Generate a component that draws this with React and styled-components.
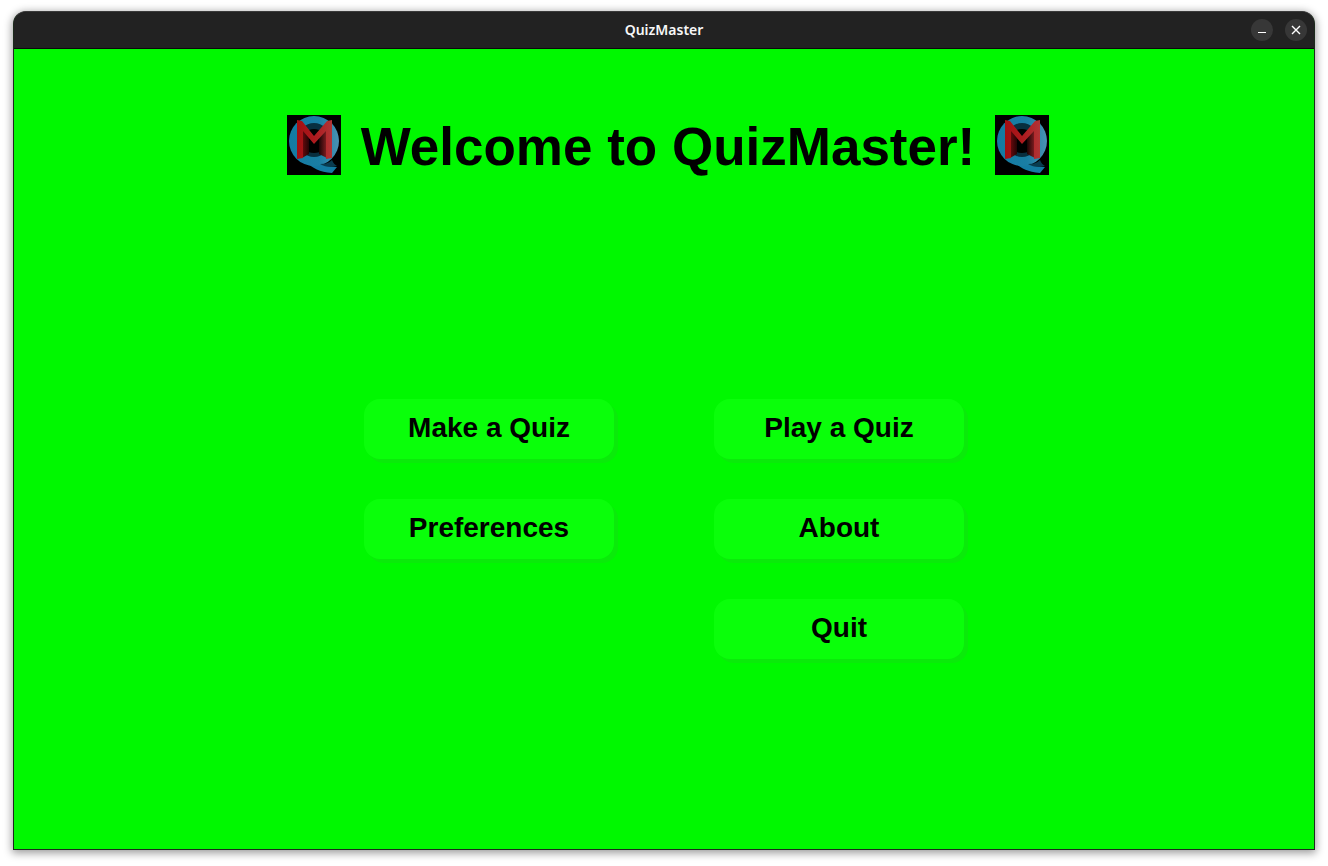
import React, { useId } from "react";
import styled, { createGlobalStyle } from "styled-components";

const GlobalStyle = createGlobalStyle`
  *, *::before, *::after { box-sizing: border-box; }
  body { margin: 0; background: #fff; }
`;

const Desktop = styled.div`
  display: flex;
  min-height: 100vh;
  padding: 11px 13px 16px;
`;

const Window = styled.div`
  flex: 1;
  display: flex;
  flex-direction: column;
  overflow: hidden;
  border: 1px solid #1c2a1c;
  border-top-color: #3a3a3a;
  border-radius: 13px 13px 0 0;
  background: #222;
  box-shadow: 0 2px 8px 1px rgba(0, 0, 0, 0.4);
`;

const TitleBar = styled.header`
  display: grid;
  grid-template-columns: 1fr auto 1fr;
  align-items: center;
  height: 37px;
  padding: 0 7px;
  border-bottom: 1px solid #0a0a0a;
  background: #222;
`;

const WindowTitle = styled.div`
  grid-column: 2;
  color: #f7f7f7;
  font: 600 14px/20px "Noto Sans", sans-serif;
`;

const WindowControls = styled.div`
  display: flex;
  justify-content: flex-end;
  gap: 12px;
`;

const ControlButton = styled.button`
  display: grid;
  place-items: center;
  width: 22px;
  height: 22px;
  padding: 0;
  border: 0;
  border-radius: 50%;
  background: #373737;
  color: #fff;
`;

const Screen = styled.main`
  flex: 1;
  display: flex;
  flex-direction: column;
  align-items: center;
  gap: 224px;
  padding: 66px 20px;
  background: #00f800;
  color: #000;
  font-family: "Liberation Sans", Arial, sans-serif;
`;

const Banner = styled.div`
  display: flex;
  align-items: center;
  gap: 20px;
  padding-left: 8px;
`;

const Heading = styled.h1`
  margin: 0;
  padding-top: 4px;
  font-size: 53px;
  line-height: 56px;
  font-weight: 700;
  white-space: nowrap;
`;

const Menu = styled.nav`
  display: grid;
  grid-template-columns: repeat(2, 250px);
  gap: 40px 100px;
`;

const MenuButton = styled.button`
  grid-column: ${({ $column }) => $column};
  height: 60px;
  padding: 0 0 2px;
  border: 0;
  border-radius: 16px;
  background: #0aff0a;
  box-shadow: 4px 4px 0 #0aeb0a;
  color: #000;
  font: 700 28px/32px "Liberation Sans", Arial, sans-serif;
`;

function Logo() {
  const id = useId();
  return (
    <svg width="54" height="60" viewBox="0 0 54 60" role="img" aria-label="QuizMaster logo">
      <defs>
        <linearGradient id={id + "ring"} x1="0" y1="0" x2="1" y2="0">
          <stop offset="0" stopColor="#147ba3" />
          <stop offset="0.6" stopColor="#1a7ea4" />
          <stop offset="1" stopColor="#4a92b3" />
        </linearGradient>
        <linearGradient id={id + "m"} x1="0" y1="0" x2="1" y2="0">
          <stop offset="0" stopColor="#a30f12" />
          <stop offset="0.5" stopColor="#ac1a1e" />
          <stop offset="1" stopColor="#b23436" />
        </linearGradient>
        <linearGradient id={id + "left"} x1="0" y1="0" x2="1" y2="0">
          <stop offset="0" stopColor="#6d0b0d" />
          <stop offset="1" stopColor="#240405" />
        </linearGradient>
        <linearGradient id={id + "right"} x1="0" y1="0" x2="1" y2="0">
          <stop offset="0" stopColor="#1c0405" />
          <stop offset="1" stopColor="#861f22" />
        </linearGradient>
      </defs>
      <rect width="54" height="60" fill="#000" />
      <path d="M12 41c7 3 20 0 23 5 3 4 8 6 15 6l-5 6c-13-1-19-5-25-10z" fill="#147ba3" />
      <circle cx="27" cy="26" r="25" fill={`url(#${id}ring)`} />
      <path d="M33 49c5 0 9-1 12-4 1 3 3 5 5 6-6 2-12 1-17-2z" fill="#093c50" />
      <ellipse cx="27" cy="25" rx="16" ry="17" fill="#082f3f" />
      <ellipse cx="27" cy="26" rx="13" ry="12" fill="#000" />
      <path d="M15 14l7 8v17l-7 4z" fill={`url(#${id}left)`} />
      <path d="M40 14l-8 9v16l8 4z" fill={`url(#${id}right)`} />
      <path
        d="M10 5l5 1 12 15L40 6l5-1v38l-6 1V16L27 29 16 16v27l-6 1z"
        fill={`url(#${id}m)`}
      />
    </svg>
  );
}

const menuItems = [
  { label: "Make a Quiz", column: 1 },
  { label: "Play a Quiz", column: 2 },
  { label: "Preferences", column: 1 },
  { label: "About", column: 2 },
  { label: "Quit", column: 2 },
];

export default function App() {
  return (
    <>
      <GlobalStyle />
      <Desktop>
        <Window>
          <TitleBar>
            <WindowTitle>QuizMaster</WindowTitle>
            <WindowControls>
              <ControlButton type="button" aria-label="Minimize">
                <svg width="10" height="10" viewBox="0 0 10 10">
                  <path d="M1 7.5h8" stroke="currentColor" />
                </svg>
              </ControlButton>
              <ControlButton type="button" aria-label="Close">
                <svg width="10" height="10" viewBox="0 0 10 10">
                  <path d="M1 1l8 8M9 1L1 9" stroke="currentColor" strokeWidth="1.4" />
                </svg>
              </ControlButton>
            </WindowControls>
          </TitleBar>
          <Screen>
            <Banner>
              <Logo />
              <Heading>Welcome to QuizMaster!</Heading>
              <Logo />
            </Banner>
            <Menu aria-label="Main menu">
              {menuItems.map(({ label, column }) => (
                <MenuButton key={label} type="button" $column={column}>
                  {label}
                </MenuButton>
              ))}
            </Menu>
          </Screen>
        </Window>
      </Desktop>
    </>
  );
}
